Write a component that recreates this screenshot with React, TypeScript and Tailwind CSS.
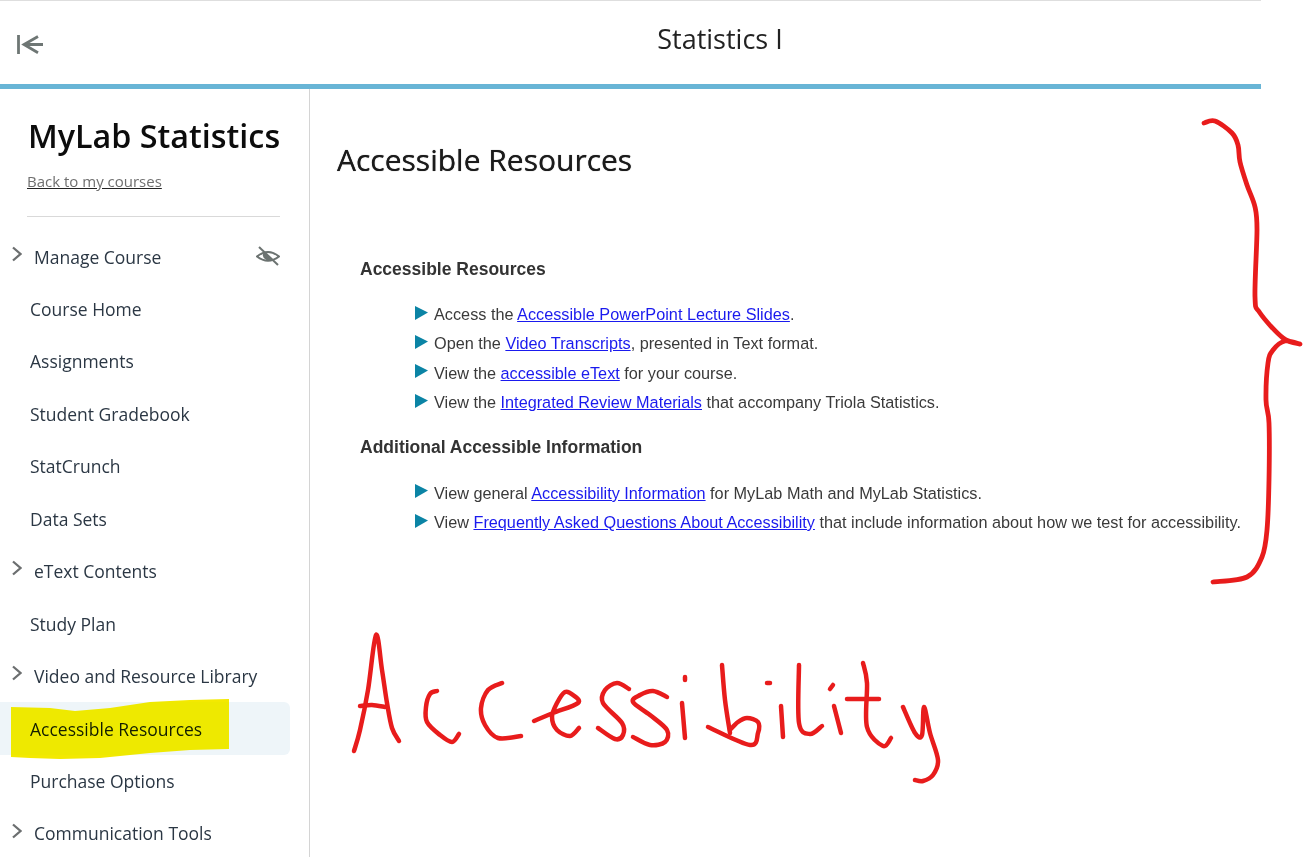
import React from 'react';

type Point = [number, number];

// hand drawn ink, traced from the picture
const strokes: Point[][] = [
  [[354, 751], [360, 730], [368, 690], [376, 635], [382, 670], [387, 703], [392, 728], [399, 741]],
  [[360, 706], [372, 705], [385, 707]],
  [[437, 691], [430, 694], [426, 707], [427, 722], [440, 735], [452, 742], [459, 734]],
  [[502, 683], [488, 690], [481, 708], [485, 725], [498, 738], [521, 736]],
  [[534, 721], [553, 713], [578, 703], [573, 695], [565, 692], [557, 703], [552, 717], [557, 730], [570, 736], [579, 728]],
  [[629, 689], [617, 683], [605, 690], [603, 703], [622, 723], [623, 735], [615, 739], [598, 728]],
  [[667, 697], [653, 691], [640, 695], [633, 702], [650, 715], [667, 730], [665, 742], [650, 745], [633, 737]],
  [[682, 703], [685, 738]],
  [[685, 677], [685, 680]],
  [[722, 665], [725, 700], [730, 733]],
  [[708, 727], [750, 745], [758, 733], [758, 722], [747, 718], [738, 722], [730, 730]],
  [[767, 683], [770, 683]],
  [[781, 706], [783, 737]],
  [[799, 665], [799, 723], [810, 734], [822, 726]],
  [[833, 685], [830, 689]],
  [[834, 706], [841, 733]],
  [[863, 663], [867, 683], [867, 727], [883, 746], [891, 738]],
  [[847, 699], [879, 699]],
  [[903, 707], [915, 733], [922, 735], [924, 707], [930, 733], [938, 760], [933, 775], [923, 781], [915, 780]],
];

const brace: Point[] = [
  [1204, 123], [1215, 121], [1232, 133], [1238, 145], [1240, 162], [1247, 185], [1255, 207], [1257, 230],
  [1255, 297], [1260, 313], [1283, 338], [1300, 344], [1285, 341], [1273, 350], [1268, 363], [1266, 400],
  [1269, 423], [1269, 480], [1267, 530], [1262, 557], [1247, 577], [1213, 582],
];

// catmull-rom through every traced point, so peaks are not cut off
const smooth = (pts: Point[]) => {
  let d = `M${pts[0][0]} ${pts[0][1]}`;
  for (let i = 0; i < pts.length - 1; i++) {
    const p0 = pts[Math.max(i - 1, 0)];
    const p1 = pts[i];
    const p2 = pts[i + 1];
    const p3 = pts[Math.min(i + 2, pts.length - 1)];
    const c1x = p1[0] + (p2[0] - p0[0]) / 6;
    const c1y = p1[1] + (p2[1] - p0[1]) / 6;
    const c2x = p2[0] - (p3[0] - p1[0]) / 6;
    const c2y = p2[1] - (p3[1] - p1[1]) / 6;
    d += ` C${c1x} ${c1y} ${c2x} ${c2y} ${p2[0]} ${p2[1]}`;
  }
  return d;
};

const navItems = [
  { label: 'Manage Course', arrow: true, hidden: true },
  { label: 'Course Home' },
  { label: 'Assignments' },
  { label: 'Student Gradebook' },
  { label: 'StatCrunch' },
  { label: 'Data Sets' },
  { label: 'eText Contents', arrow: true },
  { label: 'Study Plan' },
  { label: 'Video and Resource Library', arrow: true },
  { label: 'Accessible Resources', active: true },
  { label: 'Purchase Options' },
  { label: 'Communication Tools', arrow: true },
];

const Bullet = () => (
  <svg width="13" height="14" viewBox="0 0 13 14" className="shrink-0 mr-[6px] -mt-[3px]">
    <polygon points="0,0 13,6.5 0,14" fill="#0b84a5" />
  </svg>
);

const EyeSlash = () => (
  <svg width="24" height="20" viewBox="0 0 24 20" fill="none" stroke="#6c7371" strokeWidth="2" className="-mt-[1px]">
    <path d="M1 10.5Q12 1.5 23 10.5Q12 19 1 10.5Z" />
    <path d="M8 6L15.5 13.5A5.4 5.4 0 0 1 8 6Z" fill="#6c7371" stroke="none" />
    <path d="M3 1L22 19" />
  </svg>
);

const Item = ({ before, link, after }: { before: string; link: string; after: string }) => (
  <li className="flex items-center h-[29.3px] text-[16.26px] text-[#3a3a3a]">
    <Bullet />
    <span className="whitespace-nowrap">
      {before} <a className="text-[#1a1aee] underline">{link}</a>
      {after}
    </span>
  </li>
);

export default function App() {
  return (
    <div className="relative h-[857px] w-[1304px] overflow-hidden bg-white font-['Open_Sans',sans-serif]">
      <header className="flex h-[89px] w-[1261px] border-t border-t-[#dedede] border-b-[5px] border-b-[#68b5d6]">
        <div className="w-[179px] pl-[17px] pt-[34px]">
          <svg width="26" height="19" viewBox="0 0 26 19" fill="none" stroke="#6e7674" strokeWidth="2.8">
            <path d="M1.5 0V19" />
            <path d="M26 9.5H7M21 1.5L7 9.5L21 17.7" />
          </svg>
        </div>
        <div className="flex-1 text-center text-[27px] leading-[36px] pt-[20px] text-[#222]">Statistics I</div>
      </header>

      <div className="flex h-[768px] w-[1261px]">
        <aside className="w-[310px] shrink-0 border-r border-r-[#d4d4d4]">
          <div className="ml-[27px] mr-[29px] pt-[24px] h-[128px] border-b border-b-[#d9d9d9]">
            <h2 className="pl-px text-[32.3px] leading-[44px] font-semibold text-[#0c0c0c] whitespace-nowrap">MyLab Statistics</h2>
            <a className="block mt-[14px] text-[15px] leading-[20px] text-[#6f6f6f] underline decoration-[#222]">Back to my courses</a>
          </div>
          <nav className="mt-[13.5px]">
            {navItems.map((item) => (
              <div
                key={item.label}
                className={`flex items-center h-[52.44px] pr-[29px] text-[17.5px] ${
                  item.active ? 'w-[290px] rounded-r-md bg-[#eef5f9] text-[#161c10]' : 'text-[#2b3744]'
                } ${item.arrow ? 'pl-[12px]' : 'pl-[30px]'}`}
              >
                {item.arrow && (
                  <svg width="10" height="16" viewBox="0 0 10 16" fill="none" stroke="#6c6f70" strokeWidth="2.3" className="mr-[12px] -mt-[6px]">
                    <path d="M1 1.5L8.5 8L1 14.5" />
                  </svg>
                )}
                <span className="flex-1 whitespace-nowrap">{item.label}</span>
                {item.hidden && <EyeSlash />}
              </div>
            ))}
          </nav>
        </aside>

        <main className="flex-1 pl-[27px]">
          <h1 className="mt-[50px] text-[30px] leading-[42px] font-normal text-[#1b1b1b] [text-shadow:0_0_0.7px_#1b1b1b]">Accessible Resources</h1>
          <section className="pl-[23px] mt-[76px] font-['Liberation_Sans',Arial,sans-serif]">
            <h3 className="text-[17.5px] leading-[24px] font-bold text-[#333]">Accessible Resources</h3>
            <ul className="mt-[18.6px] pl-[55px]">
              <Item before="Access the" link="Accessible PowerPoint Lecture Slides" after="." />
              <Item before="Open the" link="Video Transcripts" after=", presented in Text format." />
              <Item before="View the" link="accessible eText" after=" for your course." />
              <Item before="View the" link="Integrated Review Materials" after=" that accompany Triola Statistics." />
            </ul>
            <h3 className="mt-[18px] text-[17.5px] leading-[24px] font-bold text-[#333]">Additional Accessible Information</h3>
            <ul className="mt-[19.4px] pl-[55px]">
              <Item before="View general" link="Accessibility Information" after=" for MyLab Math and MyLab Statistics." />
              <Item before="View" link="Frequently Asked Questions About Accessibility" after=" that include information about how we test for accessibility." />
            </ul>
          </section>
        </main>
      </div>

      {/* marker annotations on top of the screenshot */}
      <svg width="1304" height="857" viewBox="0 0 1304 857" className="absolute inset-0 pointer-events-none">
        <path
          className="mix-blend-darken"
          fill="#f3e900"
          d="M11 707 L50 708 L75 711 L110 708 L150 702 L190 700 L229 699 L229 749 L190 750 L150 753 L100 758 L60 759 L30 758 L11 757 Z"
        />
        <g fill="none" stroke="#e81c1c" strokeLinecap="round" strokeLinejoin="round">
          <path d={smooth(brace)} strokeWidth="4.8" />
          {strokes.map((s, i) => (
            <path key={i} d={smooth(s)} strokeWidth="4.5" />
          ))}
        </g>
      </svg>
    </div>
  );
}
